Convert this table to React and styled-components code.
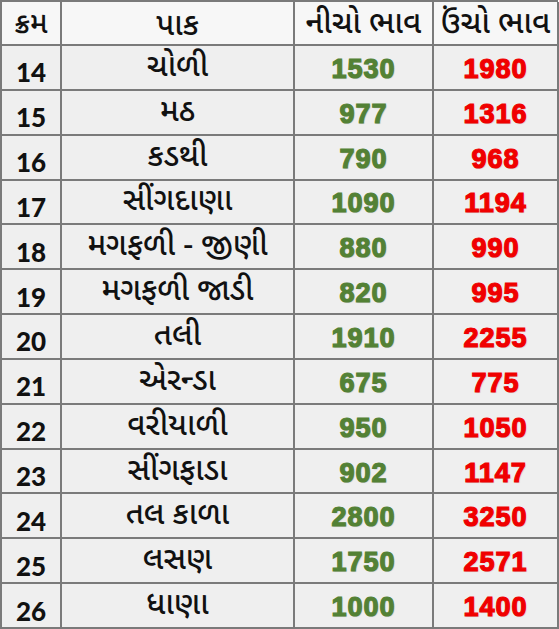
import React from "react";
import styled, { createGlobalStyle } from "styled-components";

const GlobalStyle = createGlobalStyle`
  html, body {
    margin: 0;
    padding: 0;
    background: #ffffff;
  }
`;

const guj = `"Noto Sans Gujarati", "Lohit Gujarati", "Noto Serif Gujarati", "Noto Sans", sans-serif`;

const rows = [
  ["14", "ચોળી", "1530", "1980"],
  ["15", "મઠ", "977", "1316"],
  ["16", "કડથી", "790", "968"],
  ["17", "સીંગદાણા", "1090", "1194"],
  ["18", "મગફળી - જીણી", "880", "990"],
  ["19", "મગફળી જાડી", "820", "995"],
  ["20", "તલી", "1910", "2255"],
  ["21", "એરન્ડા", "675", "775"],
  ["22", "વરીયાળી", "950", "1050"],
  ["23", "સીંગફાડા", "902", "1147"],
  ["24", "તલ કાળા", "2800", "3250"],
  ["25", "લસણ", "1750", "2571"],
  ["26", "ધાણા", "1000", "1400"],
];

const Table = styled.div`
  width: 558px;
  height: 629px;
  box-sizing: border-box;
  display: grid;
  grid-template-columns: 60px 233px 139px 125px;
  grid-template-rows: 44px repeat(13, 1fr);
  border-top: 2px solid #7a7a7a;
  border-left: 2px solid #7a7a7a;
  background: #f1f1f1;
`;

const Cell = styled.div`
  display: flex;
  align-items: center;
  justify-content: center;
  border-right: 2px solid #7a7a7a;
  border-bottom: 2px solid #7a7a7a;
  background: ${(p) => (p.$head ? "#f7f7f7" : "#efefef")};
  overflow: hidden;
  white-space: nowrap;
`;

const GujText = styled.span`
  font-family: ${guj};
  font-size: ${(p) => p.$size || 31}px;
  font-weight: 500;
  line-height: 1;
  color: #111;
  padding-top: ${(p) => p.$pad || 0}px;
`;

const NumText = styled.span`
  font-family: Lato, "Open Sans", sans-serif;
  font-weight: 900;
  font-size: 26px;
  color: #111;
  padding-top: 10px;
`;

const Price = styled.span`
  font-family: "Liberation Sans", Arial, sans-serif;
  font-weight: 700;
  font-size: 27px;
  letter-spacing: 1px;
  -webkit-text-stroke: 1.2px ${(p) => p.$color};
  color: ${(p) => p.$color};
  text-shadow: 1px 1px 1px rgba(0, 0, 0, 0.15);
  padding-top: 4px;
`;

export default function App() {
  return (
    <>
      <GlobalStyle />
      <Table>
        <Cell $head>
          <GujText $size={29} $pad={6}>ક્રમ</GujText>
        </Cell>
        <Cell $head>
          <GujText $size={31} $pad={8}>પાક</GujText>
        </Cell>
        <Cell $head>
          <GujText $size={31} $pad={4}>નીચો ભાવ</GujText>
        </Cell>
        <Cell $head>
          <GujText $size={31} $pad={4}>ઉંચો ભાવ</GujText>
        </Cell>
        {rows.map(([no, crop, low, high]) => (
          <React.Fragment key={no}>
            <Cell>
              <NumText>{no}</NumText>
            </Cell>
            <Cell>
              <GujText $size={31} $pad={2}>{crop}</GujText>
            </Cell>
            <Cell>
              <Price $color="#538135">{low}</Price>
            </Cell>
            <Cell>
              <Price $color="#f00000">{high}</Price>
            </Cell>
          </React.Fragment>
        ))}
      </Table>
    </>
  );
}
